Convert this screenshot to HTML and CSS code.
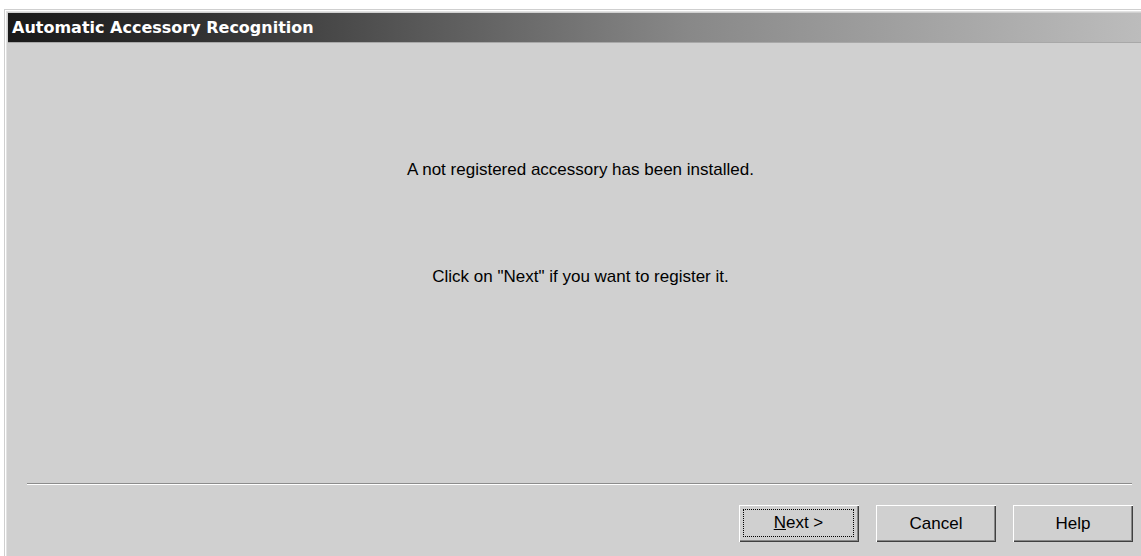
FILE: index.html
```html
<!DOCTYPE html>
<html>
<head>
<meta charset="utf-8">
<title>Automatic Accessory Recognition</title>
<link rel="stylesheet" href="styles.css">
</head>
<body>
<div class="dialog">
  <div class="frame">
    <div class="title-bar">Automatic Accessory Recognition</div>
    <div class="content">
      <p class="message msg-first">A not registered accessory has been installed.</p>
      <p class="message msg-second">Click on "Next" if you want to register it.</p>
    </div>
    <div class="separator"></div>
    <div class="buttons">
      <button class="btn btn-default"><span class="focus"><u>N</u>ext &gt;</span></button>
      <button class="btn">Cancel</button>
      <button class="btn">Help</button>
    </div>
  </div>
</div>
</body>
</html>
```
FILE: styles.css
```css
html, body {
  margin: 0;
  padding: 0;
  background: #ffffff;
  height: 100%;
  overflow: hidden;
}

.dialog {
  padding: 9px 0 0 4px;
  height: 100%;
  box-sizing: border-box;
}

.frame {
  height: 100%;
  box-sizing: border-box;
  border-top: 1px solid #cfcfcf;
  border-left: 1px solid #cfcfcf;
  box-shadow: inset 1px 1px 0 #ffffff, inset 2px 2px 0 #e2e2e2;
  padding: 3px 0 0 3px;
  background: #d0d0d0;
  display: flex;
  flex-direction: column;
  font-family: "Liberation Sans", Arial, sans-serif;
}

.title-bar {
  height: 30px;
  box-sizing: border-box;
  background: linear-gradient(to right, #191919 0%, #333333 18%, #888888 60%, #bcbcbc 100%);
  border-bottom: 1px solid #a8a8a8;
  color: #ffffff;
  font-family: "DejaVu Sans", Verdana, sans-serif;
  font-weight: bold;
  font-size: 16px;
  line-height: 29px;
  padding-left: 4px;
  white-space: nowrap;
}

.content {
  flex: 1;
  display: flex;
  flex-direction: column;
  align-items: center;
  padding-left: 12px;
}

.message {
  margin: 0;
  font-size: 17px;
  color: #000000;
  line-height: 20px;
}

.msg-first {
  margin-top: 117px;
}

.msg-second {
  margin-top: 87px;
}

.separator {
  margin: 0 9px 0 19px;
  border-top: 1px solid #8c8c8c;
  border-bottom: 1px solid #ffffff;
}

.buttons {
  display: flex;
  justify-content: flex-end;
  gap: 17px;
  padding: 20px 8px 14px 0;
}

.btn {
  width: 120px;
  height: 37px;
  box-sizing: border-box;
  background: #d0d0d0;
  border: none;
  border-radius: 0;
  padding: 0;
  font-family: "Liberation Sans", Arial, sans-serif;
  font-size: 17px;
  color: #000000;
  box-shadow: inset 1px 1px 0 #ffffff, inset -1px -1px 0 #404040, inset -2px -2px 0 #888888;
  display: flex;
  align-items: center;
  justify-content: center;
}

.btn-default {
  padding: 4px 5px 5px 4px;
}

.focus {
  flex: 1;
  align-self: stretch;
  border: 1px dotted #000000;
  display: flex;
  align-items: center;
  justify-content: center;
}
```
